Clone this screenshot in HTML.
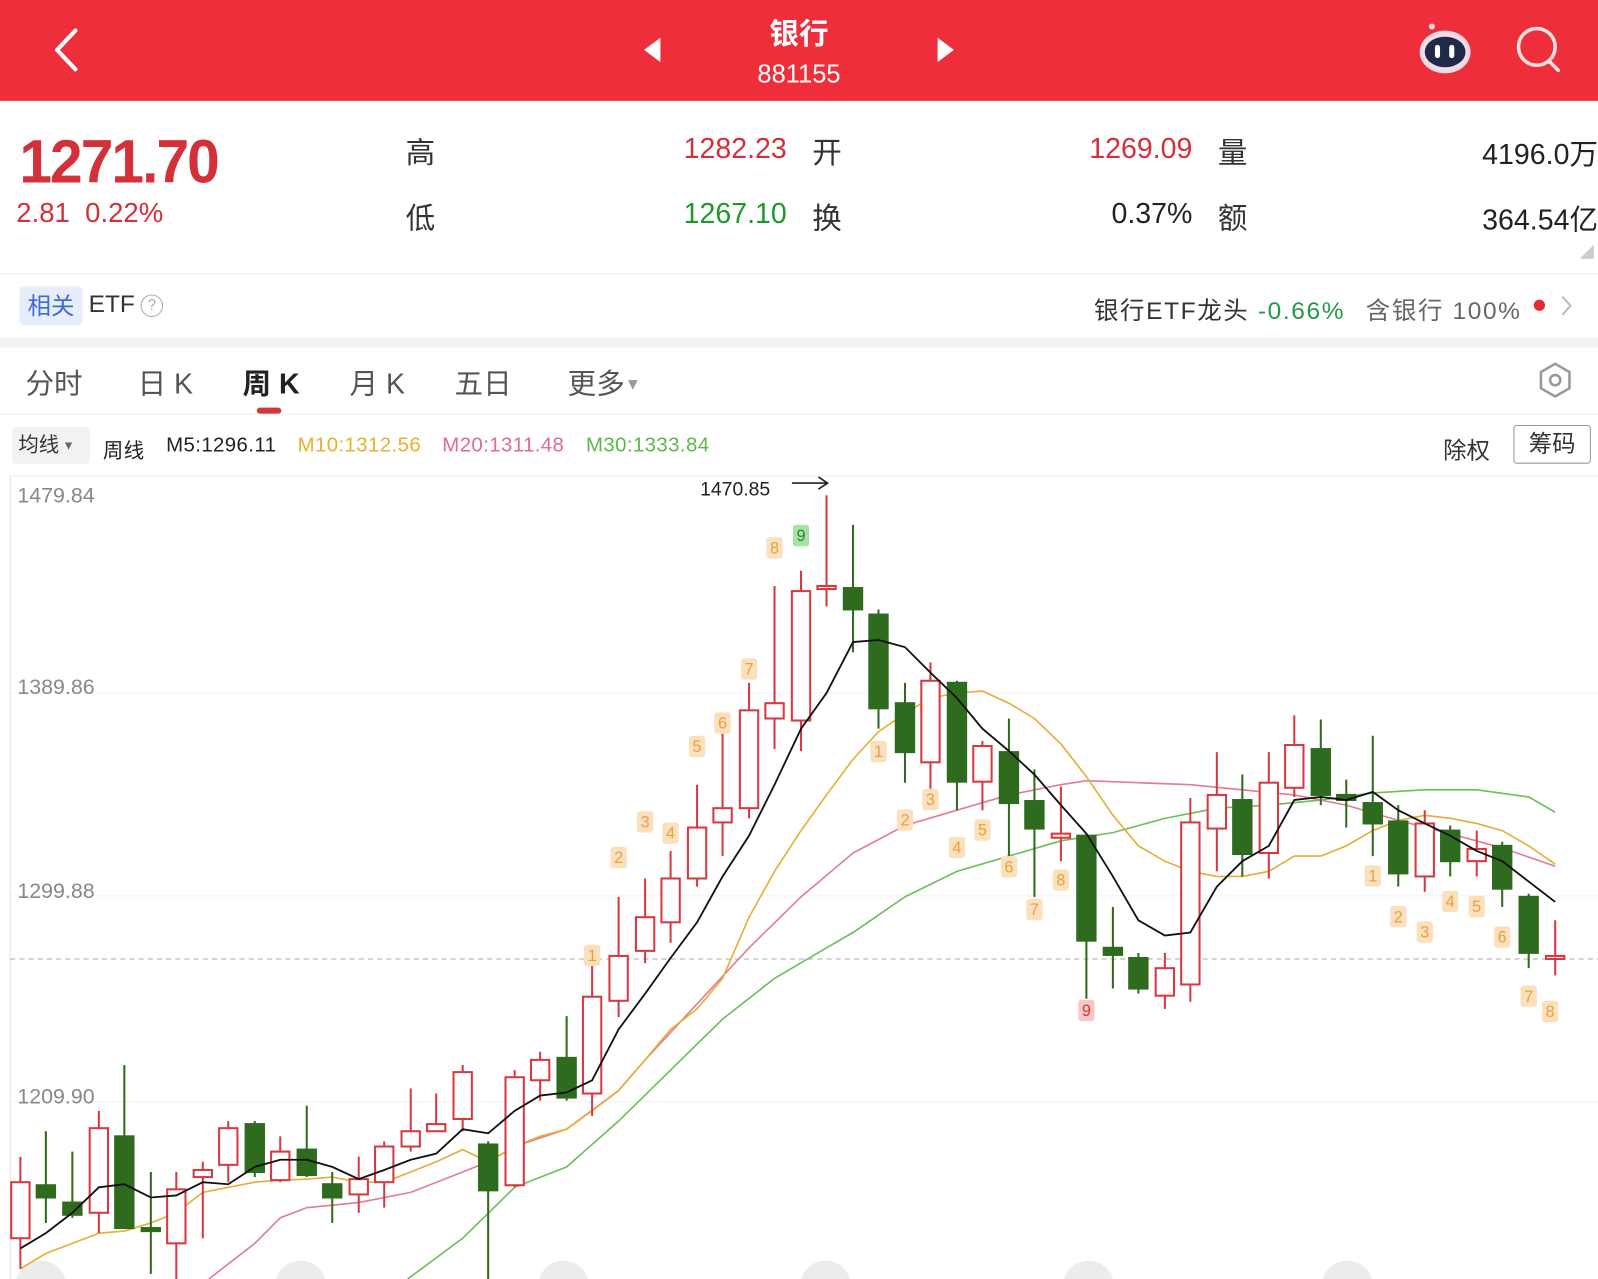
<!DOCTYPE html>
<html><head><meta charset="utf-8"><style>
*{margin:0;padding:0;box-sizing:border-box}
body{width:1598px;height:1279px;overflow:hidden;background:#fff;font-family:"Liberation Sans","Noto Sans CJK SC",sans-serif}
#w{width:1568px;height:1255px;position:relative;transform:scale(1.01913);transform-origin:0 0}
.a{position:absolute;white-space:nowrap}
.hdr{position:absolute;left:0;top:0;width:1568px;height:99px;background:#ee2e3b}
.r{color:#d3303a}.g{color:#1b9a2b}.k{color:#222}
.ma{position:absolute;top:426px;font-size:20px;letter-spacing:0.4px;white-space:nowrap}
</style></head><body><div id="w">
<div class="hdr"></div>
<svg class="a" style="left:0;top:0" width="1568" height="100">
<path d="M74 30 L56 49 L74 68" stroke="#fff" stroke-width="4" fill="none" stroke-linecap="round" stroke-linejoin="round"/>
<path d="M648 37 L632 49 L648 61Z" fill="#fff"/>
<path d="M920 37 L936 49 L920 61Z" fill="#fff"/>
<circle cx="1405" cy="26" r="3" fill="#f5d0d8"/>
<ellipse cx="1418" cy="51" rx="25" ry="21" fill="#f3dbe5"/>
<ellipse cx="1418" cy="51" rx="20" ry="15" fill="#1f2a4a"/>
<rect x="1408" y="44" width="5" height="13" rx="2.5" fill="#fff"/><rect x="1422" y="44" width="5" height="13" rx="2.5" fill="#fff"/>
<circle cx="1508" cy="46" r="18" stroke="#fde0e0" stroke-width="3.5" fill="none"/>
<path d="M1520 60 L1529 69" stroke="#fde0e0" stroke-width="3.5" stroke-linecap="round"/>
</svg>
<div class="a" style="left:684px;top:10px;width:200px;text-align:center;color:#fff;font-size:29px;font-weight:bold">银行</div>
<div class="a" style="left:684px;top:59px;width:200px;text-align:center;color:#fff;font-size:25px">881155</div>

<div class="a r" style="left:19px;top:124px;font-size:60px;font-weight:bold;letter-spacing:-2px;transform:scaleX(0.96);transform-origin:0 0">1271.70</div>
<div class="a r" style="left:16px;top:194px;font-size:27px">2.81&nbsp; 0.22%</div>
<div class="a k" style="left:398px;top:127px;font-size:29px;color:#333">高</div>
<div class="a k" style="left:398px;top:191px;font-size:29px;color:#333">低</div>
<div class="a r" style="right:796px;top:130px;font-size:28px">1282.23</div>
<div class="a g" style="right:796px;top:194px;font-size:28px">1267.10</div>
<div class="a" style="left:797px;top:127px;font-size:29px;color:#333">开</div>
<div class="a" style="left:797px;top:191px;font-size:29px;color:#333">换</div>
<div class="a r" style="right:398px;top:130px;font-size:28px">1269.09</div>
<div class="a k" style="right:398px;top:194px;font-size:28px">0.37%</div>
<div class="a" style="left:1195px;top:127px;font-size:29px;color:#333">量</div>
<div class="a" style="left:1195px;top:191px;font-size:29px;color:#333">额</div>
<div class="a k" style="right:0px;top:130px;font-size:28px">4196.0万</div>
<div class="a k" style="right:0px;top:194px;font-size:28px">364.54亿</div>
<svg class="a" style="left:1550px;top:240px" width="14" height="14"><path d="M14 0 L14 14 L0 14Z" fill="#ccc"/></svg>
<div class="a" style="left:0;top:268px;width:1568px;height:1px;background:#eee"></div>

<div class="a" style="left:19px;top:281px;width:62px;height:38px;background:#e6eefb;border-radius:4px;color:#3d6ad6;font-size:23px;line-height:38px;text-align:center">相关</div>
<div class="a" style="left:87px;top:285px;font-size:24px;color:#333">ETF</div>
<div class="a" style="left:138px;top:289px;width:22px;height:22px;border:1.5px solid #aaa;border-radius:50%;font-size:15px;color:#aaa;text-align:center;line-height:19px">?</div>
<div class="a" style="right:75px;top:285px;font-size:24px;color:#333;letter-spacing:1.6px">银行ETF龙头 <span style="color:#1f9a4a">-0.66%</span> <span style="color:#666;margin-left:12px">含银行 100%</span></div>
<div class="a" style="left:1505px;top:294px;width:11px;height:11px;border-radius:50%;background:#e42a33"></div>
<svg class="a" style="left:1530px;top:289px" width="14" height="22"><path d="M3 2 L11 11 L3 20" stroke="#bbb" stroke-width="2" fill="none"/></svg>
<div class="a" style="left:0;top:331px;width:1568px;height:10px;background:#f3f3f3"></div>

<div class="a" style="left:25px;top:355px;font-size:28px;color:#555">分时</div>
<div class="a" style="left:135px;top:355px;font-size:28px;color:#555">日 K</div>
<div class="a" style="left:238px;top:355px;font-size:28px;color:#222;font-weight:bold">周 K</div>
<div class="a" style="left:343px;top:355px;font-size:28px;color:#555">月 K</div>
<div class="a" style="left:446px;top:355px;font-size:28px;color:#555">五日</div>
<div class="a" style="left:557px;top:355px;font-size:28px;color:#555">更多<span style="font-size:16px;color:#999;vertical-align:4px">▼</span></div>
<div class="a" style="left:252px;top:400px;width:24px;height:6px;border-radius:3px;background:#d6353c"></div>
<svg class="a" style="left:1508px;top:355px" width="36" height="36"><path d="M18 2 L32 10 L32 26 L18 34 L4 26 L4 10Z" stroke="#999" stroke-width="2.5" fill="none"/><circle cx="18" cy="18" r="5" stroke="#999" stroke-width="2.5" fill="none"/></svg>
<div class="a" style="left:0;top:406px;width:1568px;height:1px;background:#eee"></div>

<div class="a" style="left:12px;top:419px;width:76px;height:36px;background:#f2f2f2;border-radius:3px;font-size:20px;line-height:36px;padding-left:6px;color:#333">均线<span style="font-size:12px;color:#666;vertical-align:2px"> ▼</span></div>
<div class="ma" style="left:101px;color:#222">周线</div>
<div class="ma" style="left:163px;color:#222">M5:1296.11</div>
<div class="ma" style="left:292px;color:#e6b12e">M10:1312.56</div>
<div class="ma" style="left:434px;color:#e06a94">M20:1311.48</div>
<div class="ma" style="left:575px;color:#5cb84a">M30:1333.84</div>
<div class="a" style="left:1416px;top:423px;font-size:23px;color:#333">除权</div>
<div class="a" style="left:1485px;top:417px;width:76px;height:38px;border:1.5px solid #999;border-radius:3px;font-size:23px;line-height:34px;text-align:center;color:#333">筹码</div>

<svg class="a" style="left:0;top:0" width="1568" height="1255" font-family="Liberation Sans" >
<line x1="10" y1="467" x2="1568" y2="467" stroke="#eee"/>
<line x1="10" y1="467" x2="10" y2="1255" stroke="#e4e4e4"/>
<line x1="10" y1="680" x2="1568" y2="680" stroke="#f3f3f3"/>
<line x1="10" y1="879" x2="1568" y2="879" stroke="#f3f3f3"/>
<line x1="10" y1="1081" x2="1568" y2="1081" stroke="#f3f3f3"/>
<line x1="10" y1="941" x2="1568" y2="941" stroke="#aaa" stroke-dasharray="5,4"/>
<g font-size="21" fill="#888"><text x="17" y="493">1479.84</text><text x="17" y="681">1389.86</text><text x="17" y="881">1299.88</text><text x="17" y="1083">1209.90</text></g>
<text x="687" y="486" font-size="19" fill="#222">1470.85</text>
<path d="M777 474 L811 474 M803 468 L812 474 L803 480" stroke="#222" stroke-width="1.6" fill="none"/>
<g fill="#ececec"><circle cx="40" cy="1262" r="25"/><circle cx="295" cy="1262" r="25"/><circle cx="553" cy="1262" r="25"/><circle cx="810" cy="1262" r="25"/><circle cx="1068" cy="1262" r="25"/><circle cx="1322" cy="1262" r="25"/></g>
<polyline fill="none" stroke="#6cbf5a" stroke-width="1.6" points="400,1255 454,1215 505,1165 556,1145 607,1100 658,1050 709,1000 760,960 811,930 837,915 888,880 939,855 990,840 1041,825 1092,817 1143,803 1194,793 1245,790 1296,785 1347,778 1398,775 1449,775 1500,782 1526,797"/>
<polyline fill="none" stroke="#e27c98" stroke-width="1.6" points="205,1255 250,1220 275,1195 301,1185 352,1180 403,1170 454,1150 479,1140 505,1125 556,1108 607,1070 633,1040 684,985 735,930 786,880 837,837 888,810 939,795 990,780 1041,770 1066,766 1117,768 1168,770 1219,775 1270,780 1321,790 1372,805 1423,818 1474,832 1526,850"/>
<polyline fill="none" stroke="#e8ad35" stroke-width="1.6" points="20,1245 45,1230 71,1220 97,1210 122,1208 148,1200 173,1190 199,1170 224,1165 250,1160 275,1158 301,1157 326,1155 352,1160 377,1160 403,1150 428,1140 454,1128 479,1140 505,1125 530,1115 556,1108 581,1090 607,1070 633,1040 658,1010 684,990 709,960 735,900 760,855 786,815 811,780 837,745 862,718 888,700 913,685 939,680 964,678 990,690 1015,705 1041,730 1066,762 1092,800 1117,830 1143,845 1168,855 1194,860 1219,860 1245,855 1270,840 1296,840 1321,830 1347,815 1372,805 1398,800 1423,803 1449,808 1474,815 1500,830 1526,848"/>
<g stroke-width="2">
<g stroke="#d8383f" fill="#fff">
<line x1="20" y1="1135" x2="20" y2="1245"/><rect x="11" y="1160" width="18" height="55"/>
<line x1="97" y1="1090" x2="97" y2="1210"/><rect x="88" y="1107" width="18" height="83"/>
<line x1="173" y1="1150" x2="173" y2="1255"/><rect x="164" y="1167" width="18" height="53"/>
<line x1="199" y1="1140" x2="199" y2="1215"/><rect x="190" y="1148" width="18" height="7"/>
<line x1="224" y1="1100" x2="224" y2="1160"/><rect x="215" y="1107" width="18" height="36"/>
<line x1="275" y1="1115" x2="275" y2="1160"/><rect x="266" y="1130" width="18" height="28"/>
<line x1="352" y1="1135" x2="352" y2="1190"/><rect x="343" y="1157" width="18" height="15"/>
<line x1="377" y1="1120" x2="377" y2="1185"/><rect x="368" y="1125" width="18" height="35"/>
<line x1="403" y1="1068" x2="403" y2="1130"/><rect x="394" y="1110" width="18" height="15"/>
<line x1="428" y1="1073" x2="428" y2="1110"/><rect x="419" y="1103" width="18" height="7"/>
<line x1="454" y1="1045" x2="454" y2="1110"/><rect x="445" y="1052" width="18" height="46"/>
<line x1="505" y1="1050" x2="505" y2="1165"/><rect x="496" y="1057" width="18" height="106"/>
<line x1="530" y1="1032" x2="530" y2="1080"/><rect x="521" y="1040" width="18" height="20"/>
<line x1="581" y1="940" x2="581" y2="1095"/><rect x="572" y="978" width="18" height="95"/>
<line x1="607" y1="880" x2="607" y2="998"/><rect x="598" y="938" width="18" height="44"/>
<line x1="633" y1="862" x2="633" y2="945"/><rect x="624" y="900" width="18" height="33"/>
<line x1="658" y1="835" x2="658" y2="925"/><rect x="649" y="862" width="18" height="43"/>
<line x1="684" y1="770" x2="684" y2="870"/><rect x="675" y="812" width="18" height="50"/>
<line x1="709" y1="720" x2="709" y2="840"/><rect x="700" y="793" width="18" height="14"/>
<line x1="735" y1="670" x2="735" y2="803"/><rect x="726" y="697" width="18" height="96"/>
<line x1="760" y1="575" x2="760" y2="735"/><rect x="751" y="690" width="18" height="15"/>
<line x1="786" y1="560" x2="786" y2="737"/><rect x="777" y="580" width="18" height="127"/>
<line x1="811" y1="486" x2="811" y2="595"/><rect x="802" y="575" width="18" height="3"/>
<line x1="913" y1="650" x2="913" y2="780"/><rect x="904" y="668" width="18" height="80"/>
<line x1="964" y1="727" x2="964" y2="795"/><rect x="955" y="732" width="18" height="35"/>
<line x1="1041" y1="772" x2="1041" y2="845"/><rect x="1032" y="818" width="18" height="4"/>
<line x1="1143" y1="935" x2="1143" y2="990"/><rect x="1134" y="950" width="18" height="27"/>
<line x1="1168" y1="783" x2="1168" y2="983"/><rect x="1159" y="807" width="18" height="159"/>
<line x1="1194" y1="738" x2="1194" y2="855"/><rect x="1185" y="780" width="18" height="33"/>
<line x1="1245" y1="738" x2="1245" y2="862"/><rect x="1236" y="768" width="18" height="69"/>
<line x1="1270" y1="702" x2="1270" y2="782"/><rect x="1261" y="731" width="18" height="42"/>
<line x1="1398" y1="795" x2="1398" y2="875"/><rect x="1389" y="808" width="18" height="52"/>
<line x1="1449" y1="815" x2="1449" y2="860"/><rect x="1440" y="833" width="18" height="12"/>
<line x1="1526" y1="903" x2="1526" y2="957"/><rect x="1517" y="938" width="18" height="3"/>
</g>
<g stroke="#2f6b1f" fill="#2f6b1f">
<line x1="45" y1="1110" x2="45" y2="1200"/><rect x="36" y="1163" width="18" height="12"/>
<line x1="71" y1="1130" x2="71" y2="1195"/><rect x="62" y="1180" width="18" height="12"/>
<line x1="122" y1="1045" x2="122" y2="1205"/><rect x="113" y="1115" width="18" height="90"/>
<line x1="148" y1="1150" x2="148" y2="1250"/><rect x="139" y="1205" width="18" height="3"/>
<line x1="250" y1="1100" x2="250" y2="1155"/><rect x="241" y="1103" width="18" height="47"/>
<line x1="301" y1="1085" x2="301" y2="1155"/><rect x="292" y="1128" width="18" height="25"/>
<line x1="326" y1="1150" x2="326" y2="1200"/><rect x="317" y="1162" width="18" height="13"/>
<line x1="479" y1="1120" x2="479" y2="1255"/><rect x="470" y="1123" width="18" height="45"/>
<line x1="556" y1="997" x2="556" y2="1080"/><rect x="547" y="1038" width="18" height="39"/>
<line x1="837" y1="515" x2="837" y2="640"/><rect x="828" y="577" width="18" height="21"/>
<line x1="862" y1="598" x2="862" y2="715"/><rect x="853" y="603" width="18" height="92"/>
<line x1="888" y1="670" x2="888" y2="768"/><rect x="879" y="690" width="18" height="48"/>
<line x1="939" y1="668" x2="939" y2="795"/><rect x="930" y="670" width="18" height="97"/>
<line x1="990" y1="705" x2="990" y2="840"/><rect x="981" y="738" width="18" height="50"/>
<line x1="1015" y1="755" x2="1015" y2="880"/><rect x="1006" y="786" width="18" height="27"/>
<line x1="1066" y1="818" x2="1066" y2="980"/><rect x="1057" y="820" width="18" height="103"/>
<line x1="1092" y1="890" x2="1092" y2="970"/><rect x="1083" y="930" width="18" height="7"/>
<line x1="1117" y1="935" x2="1117" y2="975"/><rect x="1108" y="940" width="18" height="30"/>
<line x1="1219" y1="760" x2="1219" y2="860"/><rect x="1210" y="785" width="18" height="53"/>
<line x1="1296" y1="706" x2="1296" y2="790"/><rect x="1287" y="735" width="18" height="45"/>
<line x1="1321" y1="765" x2="1321" y2="812"/><rect x="1312" y="780" width="18" height="5"/>
<line x1="1347" y1="722" x2="1347" y2="840"/><rect x="1338" y="788" width="18" height="20"/>
<line x1="1372" y1="790" x2="1372" y2="870"/><rect x="1363" y="806" width="18" height="51"/>
<line x1="1423" y1="810" x2="1423" y2="860"/><rect x="1414" y="815" width="18" height="30"/>
<line x1="1474" y1="826" x2="1474" y2="890"/><rect x="1465" y="830" width="18" height="42"/>
<line x1="1500" y1="877" x2="1500" y2="950"/><rect x="1491" y="880" width="18" height="55"/>
</g></g>
<polyline fill="none" stroke="#111" stroke-width="1.8" points="20,1225 45,1210 71,1190 97,1165 122,1162 148,1175 173,1173 199,1160 224,1162 250,1145 275,1138 301,1138 326,1145 352,1157 377,1148 403,1138 428,1132 454,1108 479,1112 505,1090 530,1075 556,1072 581,1060 607,1010 633,975 658,940 684,905 709,860 735,820 760,770 786,715 811,680 837,630 862,628 888,635 913,660 939,685 964,715 990,737 1015,760 1041,790 1066,818 1092,860 1117,903 1143,918 1168,915 1194,870 1219,845 1245,830 1270,785 1296,782 1321,785 1347,777 1372,795 1398,808 1423,820 1449,835 1474,845 1500,865 1526,885"/>
<g font-size="16" text-anchor="middle">
<g fill="#fbe0bd">
<rect x="573" y="927" width="16" height="21" rx="3"/><rect x="599" y="831" width="16" height="21" rx="3"/><rect x="625" y="796" width="16" height="21" rx="3"/><rect x="650" y="807" width="16" height="21" rx="3"/><rect x="676" y="722" width="16" height="21" rx="3"/><rect x="701" y="699" width="16" height="21" rx="3"/><rect x="727" y="646" width="16" height="21" rx="3"/><rect x="752" y="527" width="16" height="21" rx="3"/>
<rect x="854" y="727" width="16" height="21" rx="3"/><rect x="880" y="794" width="16" height="21" rx="3"/><rect x="905" y="774" width="16" height="21" rx="3"/><rect x="931" y="821" width="16" height="21" rx="3"/><rect x="956" y="804" width="16" height="21" rx="3"/><rect x="982" y="840" width="16" height="21" rx="3"/><rect x="1007" y="882" width="16" height="21" rx="3"/><rect x="1033" y="853" width="16" height="21" rx="3"/>
<rect x="1339" y="849" width="16" height="21" rx="3"/><rect x="1364" y="889" width="16" height="21" rx="3"/><rect x="1390" y="904" width="16" height="21" rx="3"/><rect x="1415" y="874" width="16" height="21" rx="3"/><rect x="1441" y="879" width="16" height="21" rx="3"/><rect x="1466" y="909" width="16" height="21" rx="3"/><rect x="1492" y="967" width="16" height="21" rx="3"/><rect x="1513" y="982" width="16" height="21" rx="3"/>
</g>
<rect x="778" y="515" width="16" height="21" rx="3" fill="#a8e0a8"/>
<rect x="1058" y="981" width="16" height="21" rx="3" fill="#f8c8c8"/>
<g fill="#e8a040">
<text x="581" y="943">1</text><text x="607" y="847">2</text><text x="633" y="812">3</text><text x="658" y="823">4</text><text x="684" y="738">5</text><text x="709" y="715">6</text><text x="735" y="662">7</text><text x="760" y="543">8</text>
<text x="862" y="743">1</text><text x="888" y="810">2</text><text x="913" y="790">3</text><text x="939" y="837">4</text><text x="964" y="820">5</text><text x="990" y="856">6</text><text x="1015" y="898">7</text><text x="1041" y="869">8</text>
<text x="1347" y="865">1</text><text x="1372" y="905">2</text><text x="1398" y="920">3</text><text x="1423" y="890">4</text><text x="1449" y="895">5</text><text x="1474" y="925">6</text><text x="1500" y="983">7</text><text x="1521" y="998">8</text>
</g>
<text x="786" y="531" fill="#2a8a2a">9</text>
<text x="1066" y="997" fill="#d8383f">9</text>
</g>
</svg>
</div></body></html>
